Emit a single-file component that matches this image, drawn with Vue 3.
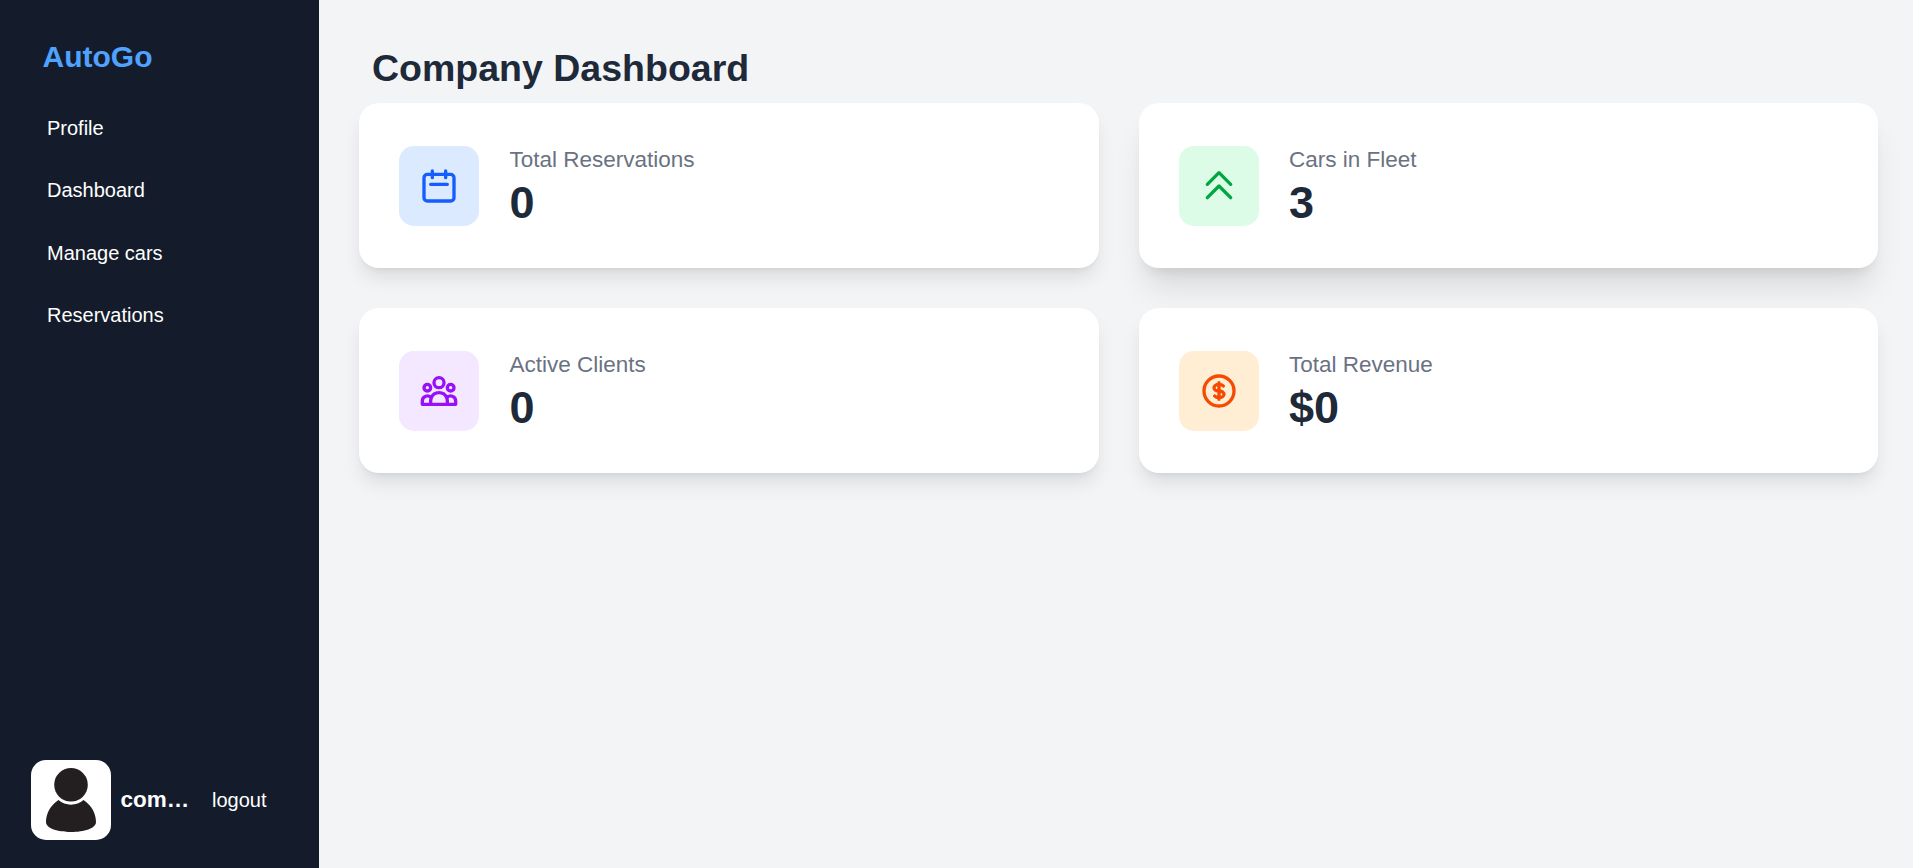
<script setup>
const links = ['Profile', 'Dashboard', 'Manage cars', 'Reservations']

const cards = [
  {
    label: 'Total Reservations',
    value: '0',
    tone: 'blue',
    icon: 'M8 7V3m8 4V3m-9 8h10M5 21h14a2 2 0 002-2V7a2 2 0 00-2-2H5a2 2 0 00-2 2v12a2 2 0 002 2z',
  },
  {
    label: 'Cars in Fleet',
    value: '3',
    tone: 'green',
    raised: true,
    icon: 'M5 11l7-7 7 7M5 19l7-7 7 7',
  },
  {
    label: 'Active Clients',
    value: '0',
    tone: 'purple',
    icon: 'M17 20h5v-2a3 3 0 00-5.356-1.857M17 20H7m10 0v-2c0-.656-.126-1.283-.356-1.857M7 20H2v-2a3 3 0 015.356-1.857M7 20v-2c0-.656.126-1.283.356-1.857m0 0a5.002 5.002 0 019.288 0M15 7a3 3 0 11-6 0 3 3 0 016 0zm6 3a2 2 0 11-4 0 2 2 0 014 0zM7 10a2 2 0 11-4 0 2 2 0 014 0z',
  },
  {
    label: 'Total Revenue',
    value: '$0',
    tone: 'orange',
    icon: 'M12 8c-1.657 0-3 .895-3 2s1.343 2 3 2 3 .895 3 2-1.343 2-3 2m0-8c1.11 0 2.08.402 2.599 1M12 8V7m0 1v8m0 0v1m0-1c-1.11 0-2.08-.402-2.599-1M21 12a9 9 0 11-18 0 9 9 0 0118 0z',
  },
]
</script>

<template>
  <div class="layout">
    <aside class="sidebar">
      <div class="brand">AutoGo</div>
      <nav class="nav">
        <a v-for="link in links" :key="link" class="nav-link">{{ link }}</a>
      </nav>
      <div class="account">
        <svg class="avatar" viewBox="0 0 80 80" aria-hidden="true">
          <rect width="80" height="80" fill="#fff" />
          <path
            d="M27.500 40C19 45.500 15 54 15 62C15 68.500 27 72 40 72S65 68.500 65 62C65 54 61 45.500 52.500 40C46 46.200 34 46.200 27.500 40Z"
            fill="#231f20"
          />
          <circle cx="40" cy="24.800" r="16.800" fill="#231f20" />
        </svg>
        <span class="user">com…</span>
        <button class="logout" type="button">logout</button>
      </div>
    </aside>

    <main class="main">
      <h1 class="title">Company Dashboard</h1>
      <section class="grid">
        <article
          v-for="card in cards"
          :key="card.label"
          class="card"
          :class="{ raised: card.raised }"
        >
          <div class="tile" :class="card.tone">
            <svg class="icon" viewBox="0 0 24 24" aria-hidden="true">
              <path :d="card.icon" />
            </svg>
          </div>
          <div>
            <p class="label">{{ card.label }}</p>
            <p class="value">{{ card.value }}</p>
          </div>
        </article>
      </section>
    </main>
  </div>
</template>

<style>
body {
  margin: 0;
  background: #f3f4f6;
}
</style>

<style scoped>
.layout {
  display: flex;
  height: 100vh;
  background: #f3f4f6;
  font-family: "Liberation Sans", Arial, sans-serif;
}

.sidebar {
  box-sizing: border-box;
  display: flex;
  flex-direction: column;
  flex: none;
  width: 319px;
  padding: 37px 31px 28px;
  background: #141c2c;
  color: #fff;
}

.brand {
  margin-left: 11.5px;
  font-size: 30px;
  line-height: 40px;
  font-weight: 700;
  color: #50a2ff;
}

.nav {
  display: flex;
  flex-direction: column;
  gap: 12.5px;
  margin: 25.5px 0 0 6px;
}

.nav-link {
  padding: 10px;
  font-size: 20px;
  line-height: 30px;
}

.account {
  display: flex;
  align-items: center;
  margin-top: auto;
}

.avatar {
  flex: none;
  width: 80px;
  height: 80px;
  border-radius: 15px;
}

.user {
  width: 75px;
  margin: 0 0 2px 9.5px;
  white-space: nowrap;
  font-size: 22.5px;
  line-height: 35px;
  font-weight: 700;
}

.logout {
  margin: 0 0 0 16.5px;
  padding: 0;
  border: 0;
  background: none;
  color: inherit;
  font: inherit;
  font-size: 20px;
  line-height: 30px;
}

.main {
  box-sizing: border-box;
  flex: 1;
  min-width: 0;
  padding: 45.5px 35px 40px 40px;
}

.title {
  margin: 0 0 12.5px 13px;
  font-size: 37.5px;
  line-height: 45px;
  font-weight: 700;
  color: #1e2939;
}

.grid {
  display: grid;
  grid-template-columns: 1fr 1fr;
  gap: 40px;
}

.card {
  display: flex;
  align-items: center;
  gap: 30.5px;
  padding: 40px;
  border-radius: 20px;
  background: #fff;
  box-shadow:
    0 12.5px 18.75px -3.75px rgb(0 0 0 / 0.1),
    0 5px 7.5px -5px rgb(0 0 0 / 0.1);
}

.card.raised {
  box-shadow:
    0 25px 31.25px -6.25px rgb(0 0 0 / 0.1),
    0 10px 12.5px -7.5px rgb(0 0 0 / 0.1);
}

.tile {
  display: grid;
  place-items: center;
  width: 80px;
  height: 80px;
  border-radius: 15px;
}

.blue {
  background: #dbeafe;
  color: #155dfc;
}

.green {
  background: #dcfce7;
  color: #00a63e;
}

.purple {
  background: #f3e8ff;
  color: #9810fa;
}

.orange {
  background: #ffedd4;
  color: #f54a00;
}

.icon {
  width: 40px;
  height: 40px;
  fill: none;
  stroke: currentColor;
  stroke-width: 2;
  stroke-linecap: round;
  stroke-linejoin: round;
}

.label,
.value {
  margin: 0;
}

.label {
  padding-bottom: 2px;
  font-size: 22.5px;
  line-height: 33px;
  color: #6a7282;
}

.value {
  font-size: 45px;
  line-height: 50px;
  font-weight: 700;
  color: #1e2939;
}
</style>
